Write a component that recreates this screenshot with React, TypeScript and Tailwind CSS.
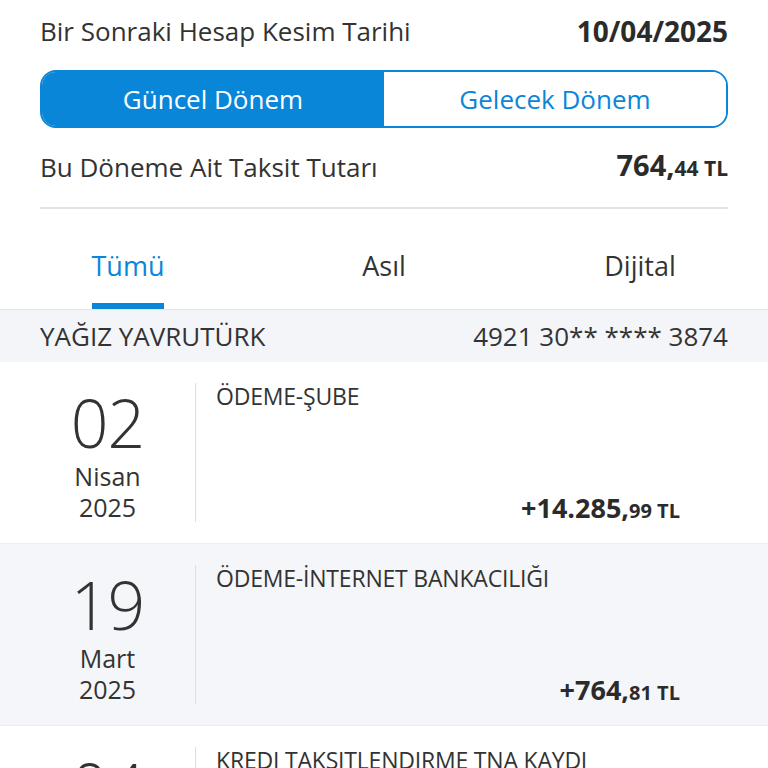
const rows = [
  { day: '02', month: 'Nisan', year: '2025', title: 'ÖDEME-ŞUBE', main: '+14.285,', cents: '99', bg: 'bg-white' },
  { day: '19', month: 'Mart', year: '2025', title: 'ÖDEME-İNTERNET BANKACILIĞI', main: '+764,', cents: '81', bg: 'bg-[#f5f6f9]' },
  { day: '04', month: 'Mart', year: '2025', title: 'KREDI TAKSITLENDIRME TNA KAYDI', main: '+0,', cents: '00', bg: 'bg-white' },
]

function Amount({ main, cents, big = false }: { main: string; cents: string; big?: boolean }) {
  return (
    <span className="font-bold leading-[20px] text-[#2b2b2b]">
      <span className={big ? 'text-[29px]' : 'text-[27px]'}>{main}</span>
      <span className={big ? 'text-[21px]' : 'text-[20px]'}>{cents} TL</span>
    </span>
  )
}

export default function App() {
  return (
    <div className="min-h-[768px] overflow-hidden bg-white text-[#333] [font-family:'Open_Sans',sans-serif]">
      <div className="px-10">
        <div className="flex h-[62px] items-center justify-between">
          <span className="text-[26px]">Bir Sonraki Hesap Kesim Tarihi</span>
          <span className="text-[28px] font-bold text-[#2b2b2b]">10/04/2025</span>
        </div>

        <div className="mt-2 flex h-[58px] overflow-hidden rounded-[16px] border-2 border-[#0a86d9]">
          <div className="flex flex-1 items-center justify-center bg-[#0a86d9] text-[26px] text-white">
            Güncel Dönem
          </div>
          <div className="flex flex-1 items-center justify-center bg-white text-[26px] text-[#0a86d9]">
            Gelecek Dönem
          </div>
        </div>

        <div className="flex h-[81px] items-center justify-between border-b-2 border-[#e4e4e4]">
          <span className="text-[26px]">Bu Döneme Ait Taksit Tutarı</span>
          <Amount main="764," cents="44" big />
        </div>
      </div>

      <div className="grid h-[101px] grid-cols-3 border-b border-[#e2e4e8]">
        {['Tümü', 'Asıl', 'Dijital'].map((t, i) => (
          <div key={t} className="flex flex-col items-center">
            <div className="relative flex h-full flex-col items-center justify-center pt-[14px]">
              <span className={`text-[27px] ${i === 0 ? 'text-[#0a86d9]' : 'text-[#333]'}`}>{t}</span>
              {i === 0 && <span className="absolute bottom-0 left-0 h-[6px] w-full bg-[#0a86d9]" />}
            </div>
          </div>
        ))}
      </div>

      <div className="flex h-[52px] items-center justify-between bg-[#f4f5f8] px-10 text-[26px]">
        <span>YAĞIZ YAVRUTÜRK</span>
        <span>4921 30** **** 3874</span>
      </div>

      {rows.map((r) => (
        <div key={r.day + r.month} className={`flex h-[182px] border-b border-[#eceef1] py-[21px] pl-5 pr-[88px] ${r.bg}`}>
          <div className="flex w-[176px] flex-col items-center border-r border-[#dedede] text-[#333]">
            <span className="mt-[1px] text-[66px] font-light leading-[76px] tracking-[-1px]">{r.day}</span>
            <span className="mt-[1px] text-[25px] leading-[31px]">{r.month}</span>
            <span className="text-[25px] leading-[31px]">{r.year}</span>
          </div>
          <div className="flex flex-1 flex-col justify-between pl-5">
            <span className="text-[23px] leading-[26px] tracking-[-0.2px]">{r.title}</span>
            <div className="flex justify-end">
              <Amount main={r.main} cents={r.cents} />
            </div>
          </div>
        </div>
      ))}
    </div>
  )
}
